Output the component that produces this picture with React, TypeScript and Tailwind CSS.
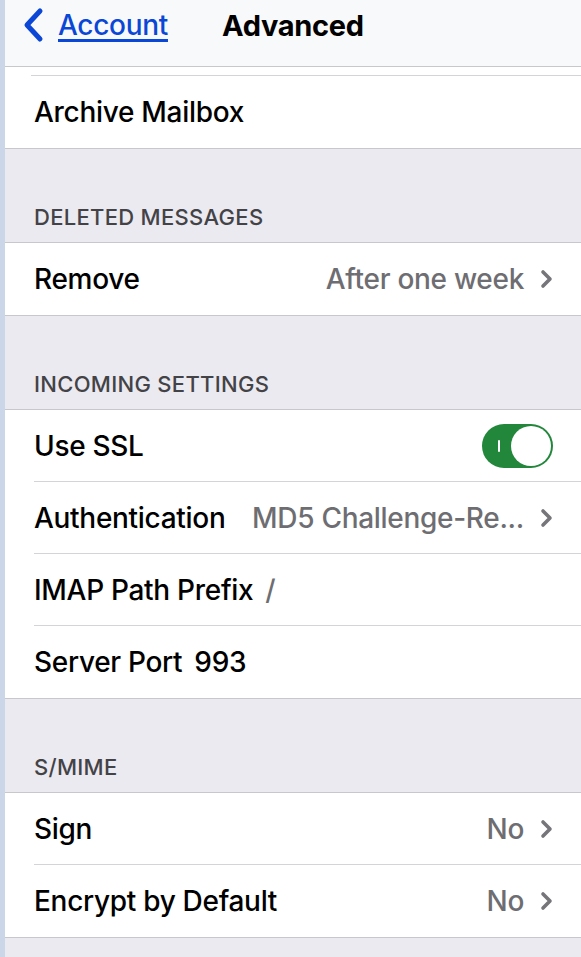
import React from "react";

const font = { fontFamily: "Inter, 'Noto Sans', sans-serif" };

const Chevron = () => (
    <svg width="13" height="20" viewBox="0 0 13 20" className="ml-[16px] shrink-0">
        <path d="M3 3 L10 10 L3 17" fill="none" stroke="#76767a" strokeWidth="3.6" strokeLinecap="round" strokeLinejoin="round" />
    </svg>
);

const Toggle = () => (
    <div className="w-[71px] h-[44px] rounded-full bg-[#22873b] relative flex items-center">
        <div className="absolute left-[16px] top-[16px] w-[2px] h-[12px] bg-white rounded-full" />
        <div className="absolute right-[2px] top-[2px] w-[40px] h-[40px] rounded-full bg-white" />
    </div>
);

type RowProps = {
    label: string;
    value?: string;
    chevron?: boolean;
    inline?: string;
    inlineGray?: boolean;
    toggle?: boolean;
    last?: boolean;
};

const Row = ({ label, value, chevron, inline, inlineGray, toggle, last }: RowProps) => (
    <div className="pl-[29px] bg-white">
        <div className={"h-[72px] flex items-center pr-[28px] " + (last ? "" : "border-b border-[#d4d4d8]")}>
            <span className="text-[28px] font-medium text-black tracking-[-0.3px] whitespace-nowrap">{label}</span>
            {inline && (
                <span className={"text-[28px] font-medium tracking-[-0.3px] ml-[12px] " + (inlineGray ? "text-[#6e6e72]" : "text-black")}>{inline}</span>
            )}
            <div className="flex-1" />
            {value && <span className="text-[28px] font-medium text-[#6e6e72] tracking-[-0.3px] whitespace-nowrap">{value}</span>}
            {chevron && <Chevron />}
            {toggle && <Toggle />}
        </div>
    </div>
);

const Header = ({ title }: { title: string }) => (
    <div className="h-[95px] flex items-end pl-[29px] pb-[8px] border-y border-[#c8c8cc] bg-[#ebeaf0]">
        <span className="text-[22px] font-medium text-[#434347] tracking-[0.3px]">{title}</span>
    </div>
);

export default function App() {
    return (
        <div className="w-[581px] h-[957px] overflow-hidden flex bg-[#ebeaf0]" style={font}>
            <div className="w-[5px] shrink-0 bg-[#cbd6e8]" />
            <div className="flex-1 flex flex-col">
                <div className="h-[67px] bg-[#f8f9fb] border-b border-[#c8c8cc] flex items-start pt-[4px]">
                    <svg width="24" height="36" viewBox="0 0 24 36" className="ml-[16px] mt-[3px]">
                        <path d="M19 4 L6 18 L19 32" fill="none" stroke="#0b47d6" strokeWidth="5" strokeLinecap="round" strokeLinejoin="round" />
                    </svg>
                    <span className="ml-[13px] text-[28px] font-medium text-[#0b47d6] underline decoration-[2.5px] underline-offset-[4px] tracking-[-0.3px]">Account</span>
                    <span className="ml-[54px] text-[29px] font-bold text-black tracking-[-0.3px]">Advanced</span>
                </div>
                <div className="bg-white pl-[26px] pt-[8px]">
                    <div className="border-t border-[#d4d4d8]" />
                    <div className="h-[72px] flex items-center pl-[3px]">
                        <span className="text-[28px] font-medium text-black tracking-[-0.3px]">Archive Mailbox</span>
                    </div>
                </div>
                <Header title="DELETED MESSAGES" />
                <Row label="Remove" value="After one week" chevron last />
                <Header title="INCOMING SETTINGS" />
                <Row label="Use SSL" toggle />
                <Row label="Authentication" value="MD5 Challenge-Re..." chevron />
                <Row label="IMAP Path Prefix" inline="/" inlineGray />
                <Row label="Server Port" inline="993" last />
                <Header title="S/MIME" />
                <Row label="Sign" value="No" chevron />
                <Row label="Encrypt by Default" value="No" chevron last />
                <div className="border-t border-[#c8c8cc]" />
            </div>
        </div>
    );
}
